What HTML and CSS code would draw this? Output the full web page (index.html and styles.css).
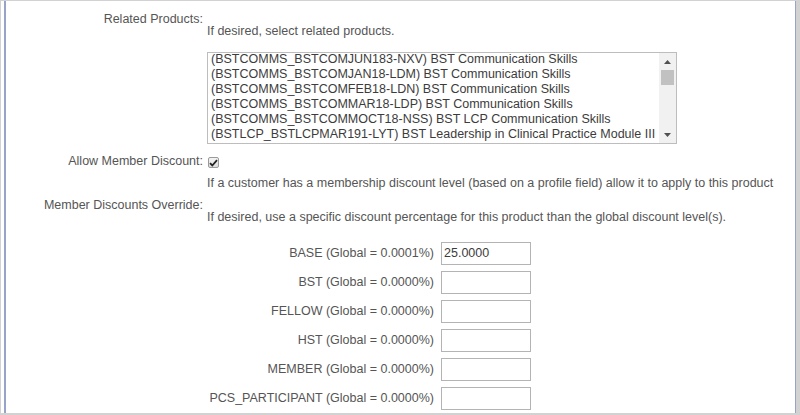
FILE: index.html
```html
<!DOCTYPE html>
<html>
<head>
<meta charset="utf-8">
<link rel="stylesheet" href="styles.css">
</head>
<body>
<div class="frame">
  <div class="panel">
    <div class="row row-related">
      <div class="label">Related Products:</div>
      <div class="content content-offset">
        <div class="desc">If desired, select related products.</div>
        <div class="listbox">
          <div class="options">
            <div class="opt">(BSTCOMMS_BSTCOMJUN183-NXV) BST Communication Skills</div>
            <div class="opt">(BSTCOMMS_BSTCOMJAN18-LDM) BST Communication Skills</div>
            <div class="opt">(BSTCOMMS_BSTCOMFEB18-LDN) BST Communication Skills</div>
            <div class="opt">(BSTCOMMS_BSTCOMMAR18-LDP) BST Communication Skills</div>
            <div class="opt">(BSTCOMMS_BSTCOMMOCT18-NSS) BST LCP Communication Skills</div>
            <div class="opt">(BSTLCP_BSTLCPMAR191-LYT) BST Leadership in Clinical Practice Module III Residency</div>
          </div>
          <div class="scrollbar">
            <div class="sb-btn"><svg width="7" height="4" viewBox="0 0 7 4"><path d="M0 4 L3.5 0 L7 4 Z" fill="#505050"/></svg></div>
            <div class="sb-track"><div class="sb-thumb"></div></div>
            <div class="sb-btn"><svg width="7" height="4" viewBox="0 0 7 4"><path d="M0 0 L7 0 L3.5 4 Z" fill="#505050"/></svg></div>
          </div>
        </div>
      </div>
    </div>

    <div class="row row-allow">
      <div class="label">Allow Member Discount:</div>
      <div class="content">
        <div class="field-line">
          <span class="checkbox"><svg width="9" height="8" viewBox="0 0 9 8"><path d="M1 4.2 L3.3 6.5 L8 1.2" fill="none" stroke="#222" stroke-width="1.8"/></svg></span>
        </div>
        <div class="desc desc-below">If a customer has a membership discount level (based on a profile field) allow it to apply to this product</div>
      </div>
    </div>

    <div class="row row-override">
      <div class="label">Member Discounts Override:</div>
      <div class="content content-offset">
        <div class="desc">If desired, use a specific discount percentage for this product than the global discount level(s).</div>
        <div class="discounts">
          <div class="d-label">BASE (Global = 0.0001%)</div><div class="d-input">25.0000</div>
          <div class="d-label">BST (Global = 0.0000%)</div><div class="d-input"></div>
          <div class="d-label">FELLOW (Global = 0.0000%)</div><div class="d-input"></div>
          <div class="d-label">HST (Global = 0.0000%)</div><div class="d-input"></div>
          <div class="d-label">MEMBER (Global = 0.0000%)</div><div class="d-input"></div>
          <div class="d-label">PCS_PARTICIPANT (Global = 0.0000%)</div><div class="d-input"></div>
        </div>
      </div>
    </div>
  </div>
</div>
</body>
</html>
```

FILE: styles.css
```css
html, body {
  margin: 0;
  padding: 0;
}
body {
  width: 800px;
  height: 415px;
  overflow: hidden;
  background: #d2d2d2;
  padding: 1px 4px 2px 1px;
  box-sizing: border-box;
  font-family: "Liberation Sans", Arial, sans-serif;
  font-size: 12.5px;
  line-height: 15px;
  color: #555;
}
.frame {
  height: 100%;
  background: #fff;
  padding-left: 3px;
  box-sizing: border-box;
}
.panel {
  height: 100%;
  box-sizing: border-box;
  border-left: 2px solid #97a4c8;
  border-right: 1px solid #97a4c8;
  padding-top: 11px;
  overflow: hidden;
}
.row {
  display: flex;
  gap: 4px;
}
.label {
  width: 197px;
  flex: none;
  text-align: right;
  white-space: nowrap;
}
.content {
  flex: 1;
  min-width: 0;
}
.content-offset {
  padding-top: 12px;
}
.desc {
  white-space: nowrap;
}
.row-allow {
  margin-top: 10px;
}
.row-override {
  margin-top: 7px;
}
.desc-below {
  margin-top: 7px;
}
.listbox {
  margin-top: 13px;
  width: 470px;
  height: 92px;
  box-sizing: border-box;
  border: 1px solid #bdbdbd;
  display: flex;
  color: #3c3c3c;
}
.options {
  flex: 1;
  min-width: 0;
  overflow: hidden;
  padding-left: 3px;
}
.opt {
  white-space: nowrap;
  height: 15px;
  line-height: 13px;
}
.scrollbar {
  width: 17px;
  flex: none;
  background: #f1f1f1;
  display: flex;
  flex-direction: column;
}
.sb-btn {
  height: 17px;
  display: flex;
  align-items: center;
  justify-content: center;
}
.sb-track {
  flex: 1;
  padding: 0 2px;
}
.sb-thumb {
  height: 15px;
  background: #c1c1c1;
}
.field-line {
  height: 15px;
  display: flex;
  align-items: center;
}
.checkbox {
  width: 11px;
  height: 11px;
  box-sizing: border-box;
  border: 1px solid #9a9a9a;
  border-radius: 2px;
  background: linear-gradient(#f4f4f4, #dcdcdc);
  display: flex;
  align-items: center;
  justify-content: center;
  margin-top: 2px;
  margin-left: 1px;
}
.discounts {
  margin-top: 17px;
  display: grid;
  grid-template-columns: 227px 90px;
  column-gap: 7px;
  row-gap: 6px;
  align-items: center;
}
.d-label {
  text-align: right;
  white-space: nowrap;
}
.d-input {
  height: 23px;
  box-sizing: border-box;
  border: 1px solid #b4b4b4;
  padding: 3px 2px 0;
  color: #3c3c3c;
  line-height: 15px;
}
```
